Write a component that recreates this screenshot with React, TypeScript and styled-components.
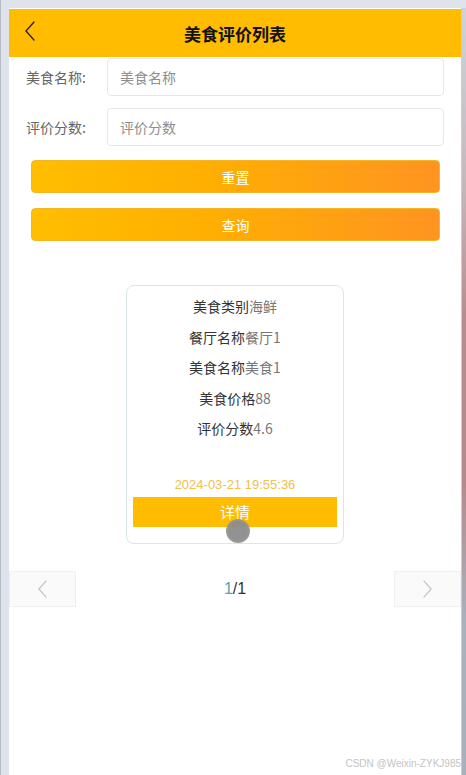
import React from "react";
import styled, { createGlobalStyle } from "styled-components";

const fields = [
  { label: "美食名称:", placeholder: "美食名称" },
  { label: "评价分数:", placeholder: "评价分数" },
];

const info = [
  { key: "美食类别", value: "海鲜" },
  { key: "餐厅名称", value: "餐厅1" },
  { key: "美食名称", value: "美食1" },
  { key: "美食价格", value: "88" },
  { key: "评价分数", value: "4.6" },
];

const Chevron: React.FC<{ dir: "left" | "right"; color: string; size: number }> = ({ dir, color, size }) => (
  <svg width={size / 2} height={size} viewBox="0 0 10 20" fill="none">
    <path
      d={dir === "left" ? "M9 1 L1 10 L9 19" : "M1 1 L9 10 L1 19"}
      stroke={color}
      strokeWidth="1.3"
      strokeLinecap="round"
      strokeLinejoin="round"
    />
  </svg>
);

const App: React.FC = () => {
  return (
    <Frame>
      <GlobalStyle />
      <Screen>
        <Header>
          <BackButton>
            <Chevron dir="left" color="#222" size={20} />
          </BackButton>
          <Title>美食评价列表</Title>
        </Header>

        <Form>
          {fields.map((f) => (
            <FormRow key={f.label}>
              <Label>{f.label}</Label>
              <Input placeholder={f.placeholder} />
            </FormRow>
          ))}
          <ActionButton>重置</ActionButton>
          <ActionButton>查询</ActionButton>
        </Form>

        <List>
          <Card>
            {info.map((i) => (
              <InfoLine key={i.key}>
                {i.key}
                <InfoValue>{i.value}</InfoValue>
              </InfoLine>
            ))}
            <DateText>2024-03-21 19:55:36</DateText>
            <DetailButton>详情</DetailButton>
            <TouchDot />
          </Card>
        </List>

        <Pager>
          <PageButton>
            <Chevron dir="left" color="#c4c4c4" size={18} />
          </PageButton>
          <PageInfo>
            <Current>1</Current>/1
          </PageInfo>
          <PageButton>
            <Chevron dir="right" color="#c4c4c4" size={18} />
          </PageButton>
        </Pager>

        <Watermark>CSDN @Weixin-ZYKJ985</Watermark>
      </Screen>
      <SideStrip />
    </Frame>
  );
};

// Styled Components
const GlobalStyle = createGlobalStyle`
  html, body {
    margin: 0;
    padding: 0;
    background: #dfe4ec;
  }
  body {
    font-family: "Noto Sans CJK SC", "Noto Sans", sans-serif;
  }
`;

const Frame = styled.div`
  display: flex;
  width: 466px;
  height: 775px;
  padding: 8px 0 0 8px;
  box-sizing: border-box;
  background: #dfe4ec;
  border-left: 1px solid #b9bec6;
  overflow: hidden;
`;

const Screen = styled.div`
  position: relative;
  width: 453px;
  display: flex;
  flex-direction: column;
  background: #ffffff;
`;

const SideStrip = styled.div`
  width: 4px;
  border-left: 1px solid #c9ced6;
  background: linear-gradient(
    to bottom,
    #cdd3dc 0%,
    #c7b9bd 22%,
    #b98d8f 40%,
    #b68a8c 62%,
    #a9b1bd 80%,
    #a8b0bb 100%
  );
`;

const Header = styled.header`
  position: relative;
  height: 48px;
  margin-top: 1px;
  display: flex;
  align-items: center;
  justify-content: center;
  background: #ffbc00;
`;

const BackButton = styled.div`
  position: absolute;
  left: 16px;
  top: 12px;
  display: flex;
`;

const Title = styled.h1`
  margin: 0;
  font-size: 17px;
  font-weight: 700;
  color: #111;
`;

const Form = styled.div`
  display: flex;
  flex-direction: column;
  padding: 1px 17px 0 17px;
`;

const FormRow = styled.div`
  display: flex;
  align-items: center;
  height: 38px;
  margin-bottom: 12px;
`;

const Label = styled.span`
  width: 81px;
  font-size: 14px;
  color: #666;
`;

const Input = styled.input`
  flex: 1;
  height: 38px;
  box-sizing: border-box;
  padding: 0 12px;
  border: 1px solid #e4e7ec;
  border-radius: 4px;
  font-family: inherit;
  font-size: 14px;
  color: #333;
  outline: none;

  &::placeholder {
    color: #8e8e8e;
  }
`;

const ActionButton = styled.button`
  margin: 2px 4px 13px 5px;
  height: 33px;
  border: 1px solid #f5b524;
  border-radius: 4px;
  background: linear-gradient(to right, #ffbe00, #ffb000 40%, #ff9421);
  color: #fff;
  font-family: inherit;
  font-size: 14px;
`;

const List = styled.div`
  display: flex;
  justify-content: center;
  padding-top: 31px;
`;

const Card = styled.div`
  position: relative;
  width: 218px;
  height: 259px;
  box-sizing: border-box;
  padding: 10px 6px 0;
  display: flex;
  flex-direction: column;
  align-items: center;
  border: 1px solid #d6e8ea;
  border-radius: 8px;
`;

const InfoLine = styled.div`
  height: 30.5px;
  font-size: 14px;
  color: #333;
`;

const InfoValue = styled.span`
  color: #777;
`;

const DateText = styled.div`
  margin-top: 28px;
  font-family: "Liberation Sans", Arial, sans-serif;
  font-size: 13px;
  color: #f2c04c;
`;

const DetailButton = styled.div`
  margin-top: 5px;
  width: 204px;
  height: 30px;
  display: flex;
  align-items: center;
  justify-content: center;
  background: #ffbc00;
  color: #fff;
  font-size: 15px;
`;

const TouchDot = styled.div`
  position: absolute;
  left: 99px;
  top: 233px;
  width: 24px;
  height: 24px;
  border-radius: 50%;
  background: radial-gradient(circle, #8c8c8c 55%, #b0b0b0 100%);
  opacity: 0.95;
`;

const Pager = styled.div`
  margin-top: 27px;
  height: 36px;
  display: flex;
  align-items: center;
  justify-content: space-between;
`;

const PageButton = styled.div`
  width: 67px;
  height: 36px;
  box-sizing: border-box;
  display: flex;
  align-items: center;
  justify-content: center;
  background: #fafafa;
  border: 1px solid #f0f0f0;
`;

const PageInfo = styled.div`
  font-family: "Liberation Sans", Arial, sans-serif;
  font-size: 16px;
  color: #333;
`;

const Current = styled.span`
  color: #5ba3ae;
`;

const Watermark = styled.div`
  position: absolute;
  right: 0;
  bottom: 6px;
  font-family: "Liberation Sans", Arial, sans-serif;
  font-size: 10px;
  color: #c4c4c4;
`;

export default App;
